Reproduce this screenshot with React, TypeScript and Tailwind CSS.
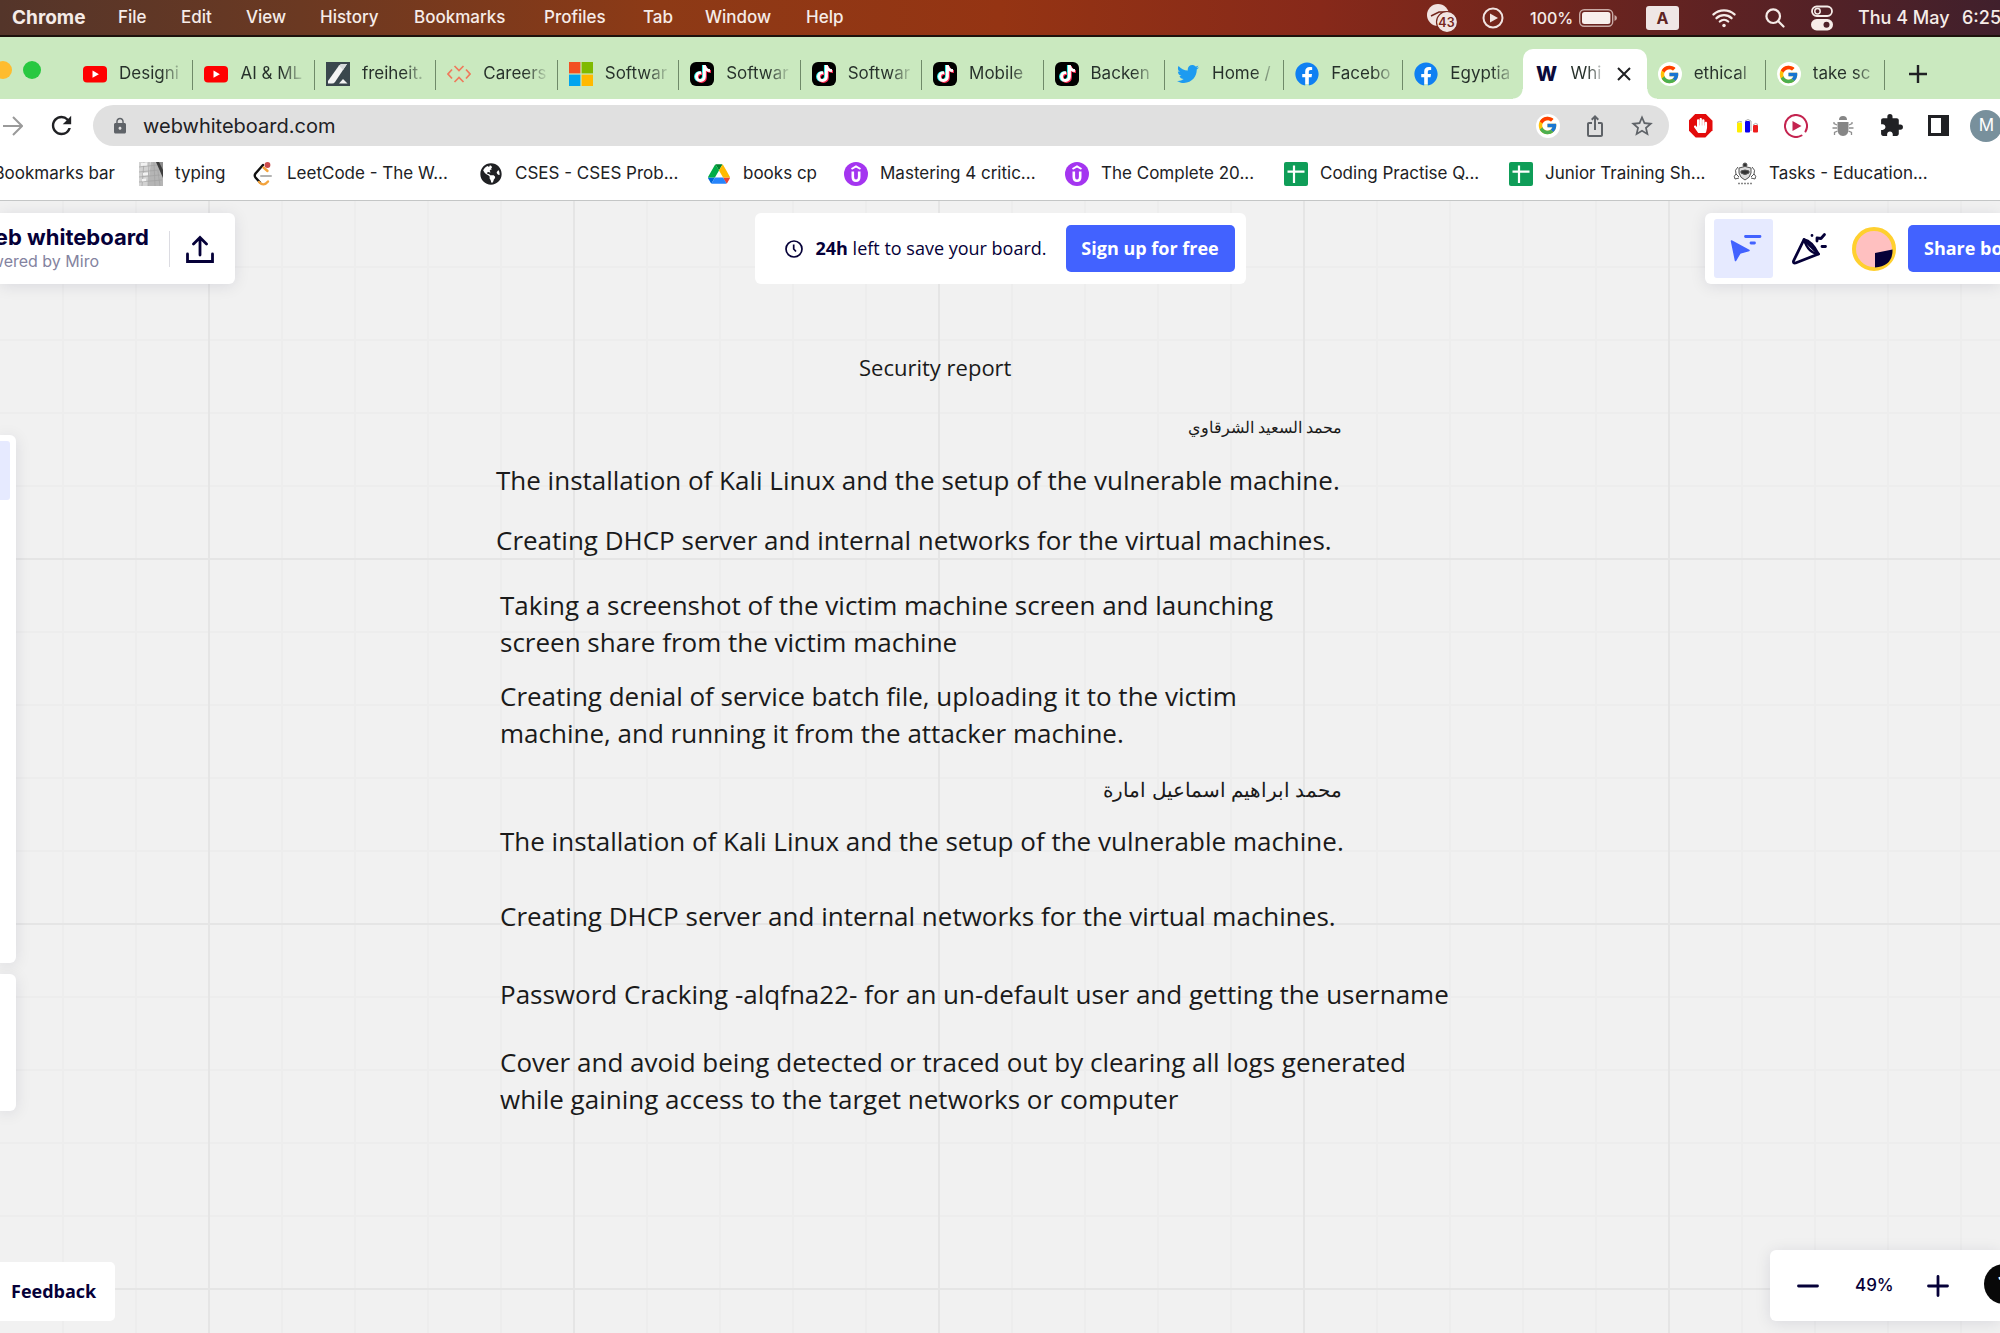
import type { ReactNode } from "react";
import { FcGoogle } from "react-icons/fc";
import { FaFacebook, FaTwitter, FaTiktok, FaHandPaper, FaGlobeAmericas } from "react-icons/fa";
import { MdExtension, MdLock, MdRefresh, MdStarOutline, MdIosShare } from "react-icons/md";
import { IoWifi } from "react-icons/io5";

/* ---------- favicons ---------- */

const YouTube = () => (
  <svg viewBox="0 0 24 24" className="size-6">
    <rect x="0" y="4" width="24" height="16.5" rx="4" fill="#ff0000" />
    <path d="M9.500 8.600v7.200l6.400-3.600z" fill="#fff" />
  </svg>
);

const Freiheit = () => (
  <svg viewBox="0 0 24 24" className="size-6">
    <rect width="24" height="24" fill="#3a474d" />
    <path d="M2 21.500V19L13 3.500Q14.500 2 16 2H21L9 20Q8 21.500 6 21.500Z" fill="#f4f4f4" />
    <path d="M13 3.500Q14.500 2 16 2H21L17 8Z" fill="#d5d8da" />
    <path d="M13 21.500L17 17L21.500 21.500Z" fill="#f4f4f4" />
  </svg>
);

const Careers = () => (
  <svg viewBox="0 0 24 24" className="size-6" fill="none" stroke="#ef7a5c" strokeWidth="1.700">
    <path d="M5 7.500L1 12L5 16.500M19 7.500L23 12L19 16.500" />
    <path d="M7.500 4L12 8.500L16.500 4M7.500 20L12 15.500L16.500 20" />
  </svg>
);

const Microsoft = () => (
  <svg viewBox="0 0 24 24" className="size-6">
    <rect width="11.400" height="11.400" fill="#f25022" />
    <rect x="12.600" width="11.400" height="11.400" fill="#7fba00" />
    <rect y="12.600" width="11.400" height="11.400" fill="#00a4ef" />
    <rect x="12.600" y="12.600" width="11.400" height="11.400" fill="#ffb900" />
  </svg>
);

const TikTok = () => (
  <span className="relative block size-6 rounded-md bg-black">
    <FaTiktok className="absolute top-[3px] left-[3px] size-[17px] text-[#25f4ee]" />
    <FaTiktok className="absolute top-1 left-[5px] size-[17px] text-[#fe2c55]" />
    <FaTiktok className="absolute top-[3px] left-1 size-[17px] text-white" />
  </span>
);

const Google = () => (
  <span className="flex size-6 items-center justify-center rounded-full bg-white">
    <FcGoogle className="size-[21px]" />
  </span>
);

const Facebook = () => (
  <span className="flex size-6 items-center justify-center rounded-full bg-[radial-gradient(circle,#fff_60%,transparent_61%)]">
    <FaFacebook className="size-6 text-[#0f80f2]" />
  </span>
);

const Twitter = () => <FaTwitter className="mx-[1px] size-[22px] text-[#1d9bf0]" />;

const WLogo = () => (
  <span className="flex size-6 shrink-0 items-center justify-center text-xl font-extrabold text-[#0b0a3a]">W</span>
);

const Keyboard = () => (
  <svg viewBox="0 0 24 24" className="size-6">
    <rect width="24" height="24" fill="#b5b5b5" />
    <path d="M0 0H12L9 24H0Z" fill="#d2d2d2" />
    <path d="M17 0H24V16Z" fill="#3d3d3d" />
    <path d="M20 0H24V8Z" fill="#8d8d8d" />
    <g stroke="#a2a2a2" strokeWidth="0.700" fill="none">
      <path d="M0 5L18 3M0 10L20 8M0 15L21 13M0 20L23 18M5 0L3 24M10 0L9 24M15 0L16 24M19 9L21 24" />
    </g>
    <path d="M2 1L8 0.500V3.500L2 4ZM4 11L9 10.500V13L4 13.500ZM3 17L7 16.500V19L3 19.500Z" fill="#f2f2f2" />
  </svg>
);

const LeetCode = () => (
  <svg viewBox="0 0 24 24" className="size-6" fill="none" strokeWidth="2.400" strokeLinecap="round">
    <path d="M12 3L4.500 11.500Q3 13.500 4.500 15.500L9 20.500" stroke="#111" />
    <path d="M16.500 9L12.500 5.500" stroke="#f3a33c" />
    <path d="M8 20Q12.500 25 17 19.500" stroke="#f3a33c" />
    <path d="M10 14H20" stroke="#b3b3b3" strokeWidth="2" />
    <circle cx="16.500" cy="3" r="2.900" fill="#cb4a4a" />
  </svg>
);

const Cses = () => (
  <span className="flex size-6 items-center justify-center">
    <FaGlobeAmericas className="size-[22px] text-[#202124]" />
  </span>
);

const Drive = () => (
  <svg viewBox="0 0 87.300 78" className="size-6 p-px">
    <path d="m6.600 66.850 3.850 6.650c.8 1.400 1.950 2.500 3.300 3.300l13.750-23.800h-27.500c0 1.550.4 3.100 1.200 4.500z" fill="#0066da" />
    <path d="m43.650 25-13.750-23.800c-1.350.8-2.500 1.900-3.300 3.300l-25.400 44a9.060 9.060 0 0 0 -1.200 4.500h27.500z" fill="#00ac47" />
    <path d="m73.550 76.800c1.350-.8 2.500-1.900 3.300-3.300l1.600-2.750 7.650-13.250c.8-1.400 1.200-2.950 1.200-4.500h-27.500l5.850 11.500z" fill="#ea4335" />
    <path d="m43.650 25 13.750-23.800c-1.350-.8-2.900-1.200-4.500-1.200h-18.500c-1.600 0-3.150.45-4.500 1.200z" fill="#00832d" />
    <path d="m59.800 53h-32.300l-13.750 23.800c1.350.8 2.900 1.200 4.500 1.200h50.800c1.600 0 3.150-.45 4.500-1.200z" fill="#2684fc" />
    <path d="m73.400 26.500-12.700-22c-.8-1.400-1.950-2.500-3.300-3.300l-13.750 23.800 16.150 28h27.450c0-1.550-.4-3.100-1.200-4.500z" fill="#ffba00" />
  </svg>
);

const Udemy = () => (
  <svg viewBox="0 0 24 24" className="size-6" fill="none" stroke="#fff">
    <circle cx="12" cy="12" r="12" fill="#a435f0" stroke="none" />
    <path d="M7.500 7L12 4.500L16.500 7" strokeWidth="2" />
    <path d="M8.800 9.500V15Q8.800 18.800 12 18.800Q15.200 18.800 15.200 15V9.500" strokeWidth="2.600" />
  </svg>
);

const Sheets = () => (
  <svg viewBox="0 0 24 24" className="size-6">
    <rect width="24" height="24" rx="2" fill="#0f9d58" />
    <path d="M3.500 9.700H20.500M10 3.500V21" stroke="#fff" strokeWidth="2.200" />
  </svg>
);

const Crest = () => (
  <svg viewBox="0 0 24 24" className="size-6" fill="none" stroke="#555" strokeWidth="1">
    <circle cx="12" cy="3" r="2" fill="#333" />
    <path d="M6 6Q12 3 18 6V11Q17 16 12 18Q7 16 6 11Z" fill="#ddd" />
    <path d="M8 9Q12 7 16 9V11Q12 14 8 11Z" fill="#333" />
    <path d="M5 5Q1 8 3 12Q0 14 2 17M19 5Q23 8 21 12Q24 14 22 17M3 12L6 15M21 12L18 15M2 17L6 16M22 17L18 16" />
    <path d="M5 21.500H19" strokeDasharray="2 1" stroke="#888" strokeWidth="1.500" />
  </svg>
);

/* ---------- data ---------- */

const menus = [
  { label: "File", w: "w-[63px]" },
  { label: "Edit", w: "w-[65px]" },
  { label: "View", w: "w-[74px]" },
  { label: "History", w: "w-[94px]" },
  { label: "Bookmarks", w: "w-[130px]" },
  { label: "Profiles", w: "w-[99px]" },
  { label: "Tab", w: "w-[62px]" },
  { label: "Window", w: "w-[101px]" },
  { label: "Help", w: "w-[60px]" },
];

const tabs = [
  { icon: <YouTube />, label: "Designi" },
  { icon: <YouTube />, label: "AI & ML" },
  { icon: <Freiheit />, label: "freiheit." },
  { icon: <Careers />, label: "Careers" },
  { icon: <Microsoft />, label: "Softwar" },
  { icon: <TikTok />, label: "Softwar" },
  { icon: <TikTok />, label: "Softwar" },
  { icon: <TikTok />, label: "Mobile" },
  { icon: <TikTok />, label: "Backen" },
];

const bookmarks = [
  { icon: <Keyboard />, label: "typing", w: "w-[112px]" },
  { icon: <LeetCode />, label: "LeetCode - The W...", w: "w-[228px]" },
  { icon: <Cses />, label: "CSES - CSES Prob...", w: "w-[228px]" },
  { icon: <Drive />, label: "books cp", w: "w-[137px]" },
  { icon: <Udemy />, label: "Mastering 4 critic...", w: "w-[221px]" },
  { icon: <Udemy />, label: "The Complete 20...", w: "w-[219px]" },
  { icon: <Sheets />, label: "Coding Practise Q...", w: "w-[225px]" },
  { icon: <Sheets />, label: "Junior Training Sh...", w: "w-[224px]" },
  { icon: <Crest />, label: "Tasks - Education...", w: "w-[220px]" },
];

/* ---------- browser chrome ---------- */

function MenuBar() {
  return (
    <header className="flex h-[37px] shrink-0 items-center overflow-hidden border-b-2 border-[#1d120c] bg-[linear-gradient(90deg,#54352a_0%,#6b3922_15%,#8d3a16_33%,#953413_50%,#87291a_66%,#74261c_75%,#5e2223_86%,#40202c_100%)] pl-3 text-[17px] text-[#f6ece8]">
      <nav aria-label="Menu" className="flex items-center">
        <button className="w-[106px] text-left text-[19px] leading-6 font-bold">Chrome</button>
        {menus.map((m) => (
          <button key={m.label} className={`${m.w} text-left font-medium whitespace-nowrap`}>{m.label}</button>
        ))}
      </nav>
      <div className="ml-auto flex w-[573px] shrink-0 items-center">
        <svg viewBox="0 0 32 28" className="h-7 w-8 shrink-0">
          <circle cx="11" cy="11" r="11" fill="#f1e4e1" />
          <path d="M4 12L12 8H20" stroke="#74261c" strokeWidth="1.500" fill="none" />
          <circle cx="20" cy="18" r="10.500" fill="#f1e4e1" stroke="#74261c" strokeWidth="1.200" />
          <text x="19.500" y="22.500" textAnchor="middle" fontSize="12.500" fontWeight="600" fill="#74261c" fontFamily="Inter, sans-serif">43</text>
        </svg>
        <svg viewBox="0 0 22 22" className="ml-[23px] size-[22px] shrink-0" fill="none" stroke="#f1e4e1">
          <circle cx="11" cy="11" r="9.500" strokeWidth="2" />
          <path d="M8 6.500V15.500L16 11Z" fill="#f1e4e1" stroke="none" />
        </svg>
        <span className="ml-[26px] w-[49px] shrink-0 text-base font-medium">100%</span>
        <svg viewBox="0 0 38 18" className="h-[18px] w-[38px] shrink-0" fill="none">
          <rect x="0.700" y="0.700" width="33" height="16.600" rx="4.500" stroke="#c9aaa5" strokeWidth="1.400" />
          <rect x="3" y="3" width="28.400" height="12" rx="2.500" fill="#f8efec" />
          <path d="M35.500 6V12Q38 11 38 9Q38 7 35.500 6Z" fill="#c9aaa5" />
        </svg>
        <span className="ml-[29px] flex h-6 w-[33px] shrink-0 items-center justify-center rounded-[3px] bg-[#efe6e5] text-base font-bold text-[#5f2423]">A</span>
        <IoWifi className="ml-[31px] size-[28px] shrink-0" />
        <svg viewBox="0 0 20 20" className="ml-[27px] size-5 shrink-0" fill="none" stroke="currentColor" strokeWidth="2.200" strokeLinecap="round">
          <circle cx="8.200" cy="8.200" r="6.800" />
          <path d="M13.300 13.300L18.500 18.500" />
        </svg>
        <svg viewBox="0 0 22 26" className="ml-[26px] h-[26px] w-[22px] shrink-0">
          <rect x="1" y="1.500" width="20" height="9.500" rx="4.700" fill="none" stroke="#f6ece8" strokeWidth="1.800" />
          <circle cx="6.500" cy="6.200" r="2.700" fill="none" stroke="#f6ece8" strokeWidth="1.500" />
          <rect x="0" y="14" width="22" height="11.500" rx="5.700" fill="#f6ece8" />
          <circle cx="15.500" cy="19.700" r="3" fill="#4f2129" />
        </svg>
        <span className="ml-[25px] w-[104px] shrink-0 text-lg leading-6 font-medium whitespace-nowrap">Thu 4 May</span>
        <span className="shrink-0 text-lg leading-6 font-medium">6:25</span>
      </div>
    </header>
  );
}

function Tab({ icon, label, divider = true }: { icon: ReactNode; label: string; divider?: boolean }) {
  return (
    <button className="relative flex h-[50px] min-w-0 flex-1 items-center pr-3 pl-[11px] text-left">
      <span className="w-6 shrink-0">{icon}</span>
      <span className="ml-3 min-w-0 flex-1 bg-[linear-gradient(90deg,#26302a_42px,transparent_66px)] bg-clip-text whitespace-nowrap text-transparent">{label}</span>
      {divider && <span className="absolute top-[11px] right-0 h-[30px] w-px bg-[#6f8a69]" />}
    </button>
  );
}

function TabStrip() {
  return (
    <div className="flex h-[62px] shrink-0 items-end overflow-hidden bg-[#cae9bf] text-[17px]">
      <div className="flex h-[50px] w-[72px] shrink-0 items-center pb-2">
        <button aria-label="Minimise" className="-ml-[6px] size-[18px] shrink-0 rounded-full bg-[#febc2e]" />
        <button aria-label="Maximise" className="ml-[11px] size-[18px] shrink-0 rounded-full bg-[#28c840]" />
      </div>
      <div className="flex w-[1093px] shrink-0">
        {tabs.map((t, i) => <Tab key={i} icon={t.icon} label={t.label} />)}
      </div>
      <div className="flex w-[720px] shrink-0">
        <Tab icon={<Twitter />} label="Home /" />
        <Tab icon={<Facebook />} label="Facebo" />
        <Tab icon={<Facebook />} label="Egyptia" divider={false} />
        <div className="relative flex h-[50px] min-w-0 flex-1 items-center rounded-t-[10px] bg-white pr-4 pl-3">
          <span className="absolute bottom-0 -left-[10px] size-[10px] bg-[radial-gradient(circle_at_0_0,transparent_9px,#fff_10px)]" />
          <span className="absolute -right-[10px] bottom-0 size-[10px] bg-[radial-gradient(circle_at_100%_0,transparent_9px,#fff_10px)]" />
          <WLogo />
          <button className="ml-3 w-8 bg-[linear-gradient(90deg,#26302a_50%,transparent_110%)] bg-clip-text text-left whitespace-nowrap text-transparent">Whi</button>
          <button aria-label="Close tab" className="ml-auto">
            <svg viewBox="0 0 14 14" className="size-[14px]" stroke="#202124" strokeWidth="2" fill="none"><path d="M1 1L13 13M13 1L1 13" /></svg>
          </button>
        </div>
        <Tab icon={<Google />} label="ethical" />
        <Tab icon={<Google />} label="take sc" />
      </div>
      <button aria-label="New tab" className="ml-6 flex h-[50px] items-center">
        <svg viewBox="0 0 18 18" className="size-[18px]" stroke="#202124" strokeWidth="2.400" fill="none"><path d="M9 0V18M0 9H18" /></svg>
      </button>
    </div>
  );
}

function Slot({ label, children }: { label: string; children: ReactNode }) {
  return <button aria-label={label} className="flex w-[47px] shrink-0 items-center justify-center">{children}</button>;
}

function Toolbar() {
  return (
    <div className="flex h-[53px] shrink-0 items-center overflow-hidden bg-white">
      <button aria-label="Forward" className="ml-[3px] shrink-0">
        <svg viewBox="0 0 20 20" className="size-5" fill="none" stroke="#9a9a9a" strokeWidth="2"><path d="M0 10H18M10 1L19 10L10 19" /></svg>
      </button>
      <button aria-label="Reload" className="ml-6 shrink-0"><MdRefresh className="size-[29px] text-[#202124]" /></button>
      <div className="ml-[17px] flex h-[41px] min-w-0 flex-1 items-center rounded-full bg-[#e0e0e0] pl-[18px]">
        <MdLock className="size-[18px] shrink-0 text-[#5f6368]" />
        <input aria-label="Address" defaultValue="webwhiteboard.com" className="ml-[14px] min-w-0 flex-1 bg-transparent text-[20px] text-[#202124] outline-none" />
        <Slot label="Search with Google"><Google /></Slot>
        <Slot label="Share page"><MdIosShare className="size-6 text-[#5f6368]" /></Slot>
        <Slot label="Bookmark page"><MdStarOutline className="size-[26px] text-[#5f6368]" /></Slot>
        <span className="w-1" />
      </div>
      <div className="w-[331px] shrink-0 pl-2">
        <div className="flex w-[333px] justify-between">
          <Slot label="Ad blocker">
            <span className="flex size-6 items-center justify-center bg-[#e30b0b] [clip-path:polygon(30%_0,70%_0,100%_30%,100%_70%,70%_100%,30%_100%,0_70%,0_30%)]"><FaHandPaper className="size-[15px] text-white" /></span>
          </Slot>
          <Slot label="Stats">
            <svg viewBox="0 0 24 24" className="size-6">
              <rect x="1" y="8.500" width="5" height="10" rx="1" fill="#ffee00" />
              <rect x="9" y="7" width="5" height="11.500" rx="1" fill="#0a00f0" />
              <rect x="17" y="11" width="5" height="7.500" rx="1" fill="#ee1c1c" />
              <path d="M9 7Q12 4 15 7V17M17 11Q19.500 8 22 10.500M1 8.500Q3.500 6.500 6 8" stroke="#aaa" fill="none" />
            </svg>
          </Slot>
          <Slot label="Video">
            <svg viewBox="0 0 24 24" className="size-6" fill="none">
              <path d="M17.500 21.500A11 11 0 1 1 21.500 17.500" stroke="#c4234f" strokeWidth="2" strokeLinecap="round" />
              <path d="M8.500 7V17L17.500 12Z" fill="#c4234f" />
            </svg>
          </Slot>
          <Slot label="Debugger">
            <svg viewBox="0 0 24 24" className="size-6" fill="#868686" stroke="#8f8f8f" strokeWidth="1.300">
              <path d="M8 6Q8 2 12 2Q16 2 16 6Z" stroke="none" />
              <path d="M6.500 8H17.500V15Q17.500 22 12 22Q6.500 22 6.500 15Z" stroke="none" />
              <path d="M6 11L3 9.500V8M18 11L21 9.500V8M6 14H1.500M18 14H22.500M6.500 17L3.500 18.500V21M17.500 17L20.500 18.500V21" fill="none" />
            </svg>
          </Slot>
          <Slot label="Extensions"><MdExtension className="size-[25px] text-[#202124]" /></Slot>
          <Slot label="Side panel">
            <svg viewBox="0 0 21 21" className="size-[21px]"><path d="M0 0H21V21H0ZM3 3V18H13V3Z" fill="#202124" fillRule="evenodd" /></svg>
          </Slot>
          <Slot label="Profile"><span className="flex size-8 shrink-0 items-center justify-center rounded-full bg-[#78909c] text-[17px] text-white">M</span></Slot>
        </div>
      </div>
    </div>
  );
}

function BookmarkBar() {
  return (
    <nav aria-label="Bookmarks" className="flex h-[49px] shrink-0 items-center overflow-hidden border-b border-[#c4c6c6] bg-white pb-1 text-[17px] whitespace-nowrap text-[#202124]">
      <a href="#" className="flex w-[115px] shrink-0 justify-end">Bookmarks bar</a>
      <div className="ml-6 flex">
        {bookmarks.map((b, i) => (
          <a key={i} href="#" className={`${b.w} flex shrink-0 items-center gap-3`}>
            <span className="size-6 shrink-0">{b.icon}</span>
            {b.label}
          </a>
        ))}
      </div>
    </nav>
  );
}

/* ---------- board ---------- */

const notes = [
  { at: "left-[859px] top-[148px]", cls: "text-[22px]", lines: ["Security report"] },
  { at: "left-[496px] top-[261px]", cls: "text-[26px]", lines: ["The installation of Kali Linux and the setup of the vulnerable machine."] },
  { at: "left-[496px] top-[321px]", cls: "text-[26px]", lines: ["Creating DHCP server and internal networks for the virtual machines."] },
  { at: "left-[500px] top-[386px]", cls: "text-[26px]", lines: ["Taking a screenshot of the victim machine screen and launching", "screen share from the victim machine"] },
  { at: "left-[500px] top-[477px]", cls: "text-[26px]", lines: ["Creating denial of service batch file, uploading it to the victim", "machine, and running it from the attacker machine."] },
  { at: "left-[500px] top-[622px]", cls: "text-[26px]", lines: ["The installation of Kali Linux and the setup of the vulnerable machine."] },
  { at: "left-[500px] top-[697px]", cls: "text-[26px]", lines: ["Creating DHCP server and internal networks for the virtual machines."] },
  { at: "left-[500px] top-[775px]", cls: "text-[26px]", lines: ["Password Cracking -alqfna22- for an un-default user and getting the username"] },
  { at: "left-[500px] top-[843px]", cls: "text-[26px]", lines: ["Cover and avoid being detected or traced out by clearing all logs generated", "while gaining access to the target networks or computer"] },
];

const panel = "bg-white shadow-[0_2px_16px_rgba(5,0,56,0.10)]";

function Board() {
  return (
    <main className="relative flex min-h-0 flex-1 flex-col overflow-hidden bg-[#f1f1f1] bg-[linear-gradient(90deg,#e5e5e5_2px,transparent_2px),linear-gradient(#e5e5e5_2px,transparent_2px),linear-gradient(90deg,#ededed_2px,transparent_2px),linear-gradient(#ededed_2px,transparent_2px)] bg-size-[365px_365px,365px_365px,73px_73px,73px_73px] bg-position-[208px_357px] font-['Open_Sans','Noto_Sans',sans-serif]">
      {notes.map((n, i) => (
        <p key={i} className={`absolute ${n.at} ${n.cls} leading-[37px] whitespace-nowrap text-[#1a1a1a]`}>
          {n.lines.map((l) => <span key={l} className="block">{l}</span>)}
        </p>
      ))}
      <p dir="rtl" lang="ar" className="absolute top-[208px] left-[1142px] w-[200px] text-base leading-[37px] whitespace-nowrap text-[#1a1a1a]">محمد السعيد الشرقاوي</p>
      <p dir="rtl" lang="ar" className="absolute top-[570px] left-[1042px] w-[300px] text-[20px] leading-[37px] whitespace-nowrap text-[#1a1a1a]">محمد ابراهيم اسماعيل امارة</p>

      <header className="relative grid grid-cols-[1fr_auto_1fr] pt-3">
        <div className={`${panel} flex h-[71px] w-[235px] items-center justify-end justify-self-start rounded-r-md pr-[21px]`}>
          <div className="flex w-[149px] flex-col items-start overflow-hidden pb-1 font-['Inter',sans-serif] whitespace-nowrap text-[#050038]">
            <a href="#" className="self-end text-[22px] leading-7 font-bold">Web whiteboard</a>
            <span className="flex w-[99px] justify-end text-base leading-5 text-[#8483a0]">powered by Miro</span>
          </div>
          <span className="ml-5 h-9 w-px bg-[#dcdce2]" />
          <button aria-label="Export" className="ml-4">
            <svg viewBox="0 0 28 28" className="size-7" fill="none" stroke="#050038" strokeWidth="2.800"><path d="M14 20V3M7.500 9L14 2.500L20.500 9M1.500 19V26.500H26.500V19" strokeLinecap="round" /></svg>
          </button>
        </div>
        <div className="flex h-[71px] items-center rounded-md bg-white pr-[11px] pl-[30px] text-[18px] text-[#050038]">
          <svg viewBox="0 0 18 18" className="size-[18px]" fill="none" stroke="#050038" strokeWidth="1.700"><circle cx="9" cy="9" r="8" /><path d="M8.700 4.500V9L11 11.500" /></svg>
          <span className="ml-[13px] w-[233px] whitespace-nowrap"><b>24h</b> left to save your board.</span>
          <button className="ml-[17px] h-[47px] w-[169px] rounded-[5px] bg-[#4262ff] font-bold whitespace-nowrap text-white">Sign up for free</button>
        </div>
        <div className={`${panel} flex h-[71px] w-[295px] items-center justify-self-end overflow-hidden rounded-l-md pl-[9px]`}>
          <button aria-label="Collaborators' cursors" className="flex size-[59px] shrink-0 items-center justify-center rounded-[3px] bg-[#e6eaff]">
            <svg viewBox="0 0 59 59" className="size-[59px]" fill="#4262ff">
              <path d="M17.500 22L35 31.500L26 34L21.500 41.500Z" stroke="#4262ff" strokeWidth="1.500" strokeLinejoin="round" />
              <path d="M31.500 17.500H46M37 24H40.500" stroke="#4262ff" strokeWidth="2.800" strokeLinecap="round" />
            </svg>
          </button>
          <button aria-label="Reactions" className="ml-[18px] shrink-0">
            <svg viewBox="0 0 36 36" className="size-9" fill="none" stroke="#050038" strokeWidth="2.800" strokeLinecap="round" strokeLinejoin="round">
              <path d="M13 8.500L2.500 30Q2 32.500 4.500 32L27.500 23Z" />
              <path d="M13 8.500Q21 10 27.500 23Q17 22 13 8.500Z" strokeWidth="2.400" />
              <path d="M21 4.500V4.600M26 10V7L30 7.500L33.500 3.500M31 15.500H34.500" />
            </svg>
          </button>
          <svg viewBox="0 0 44 44" className="ml-[25px] size-11 shrink-0">
            <circle cx="22" cy="22" r="20" fill="#ffc0c0" stroke="#ffd02f" strokeWidth="4" />
            <path d="M23 26L40.500 22.500Q41 39 23 40.500Z" fill="#050038" />
          </svg>
          <button className="ml-3 h-[47px] w-[140px] shrink-0 rounded-[5px] bg-[#4262ff] px-4 text-left text-[18px] font-bold whitespace-nowrap text-white">Share board</button>
        </div>
      </header>

      <aside aria-label="Tools" className="absolute top-[234px] left-0 flex w-4 flex-col gap-[11px]">
        <div className={`${panel} h-[528px] rounded-r-md pt-[6px]`}>
          <button aria-label="Select" className="block h-[59px] w-[10px] rounded-r-[3px] bg-[#e6eaff]" />
        </div>
        <div className={`${panel} h-[137px] rounded-r-md`} />
      </aside>

      <footer className="relative mt-auto flex items-end justify-between pb-3">
        <button className="h-[59px] w-[115px] rounded-r-[5px] bg-white pl-[11px] text-left text-[18px] font-bold text-[#050038]">Feedback</button>
        <div className={`${panel} flex h-[71px] w-[230px] items-center overflow-hidden rounded-l-md pl-[27px] text-[#050038]`}>
          <button aria-label="Zoom out" className="shrink-0">
            <svg viewBox="0 0 22 22" className="size-[22px]" stroke="#050038" strokeWidth="2.800" strokeLinecap="round"><path d="M1.500 11H20.500" /></svg>
          </button>
          <span className="ml-9 w-[37px] shrink-0 font-['Inter',sans-serif] text-[17px] font-medium">49%</span>
          <button aria-label="Zoom in" className="ml-[35px] shrink-0">
            <svg viewBox="0 0 22 22" className="size-[22px]" stroke="#050038" strokeWidth="2.800" strokeLinecap="round"><path d="M1.500 11H20.500M11 1.500V20.500" /></svg>
          </button>
          <button aria-label="Help" className="mb-1 ml-[35px] flex size-10 shrink-0 items-center justify-center rounded-full bg-[#080808] text-2xl font-bold text-white">?</button>
        </div>
      </footer>
    </main>
  );
}

export default function App() {
  return (
    <div className="flex h-screen flex-col overflow-hidden bg-white font-['Inter','Liberation_Sans',sans-serif]">
      <MenuBar />
      <TabStrip />
      <Toolbar />
      <BookmarkBar />
      <Board />
    </div>
  );
}
